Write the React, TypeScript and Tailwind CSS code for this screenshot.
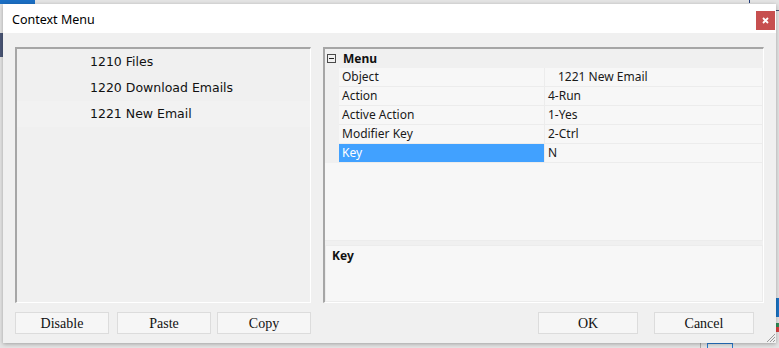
const ui = "font-['Noto_Sans','Liberation_Sans',sans-serif]";

const listItems = ["1210 Files", "1220 Download Emails", "1221 New Email"];

const props = [
  { name: "Object", value: "1221 New Email", indent: true },
  { name: "Action", value: "4-Run" },
  { name: "Active Action", value: "1-Yes" },
  { name: "Modifier Key", value: "2-Ctrl" },
  { name: "Key", value: "N", selected: true },
];

const Button = ({ label, width }: { label: string; width: string }) => (
  <button
    className={`${width} h-[22px] border border-[#dcdcdc] bg-[#f6f6f6] pt-[1px] font-['Liberation_Serif',serif] text-[14px] leading-none text-[#111]`}
  >
    {label}
  </button>
);

const PropertyGrid = () => (
  <div className="flex h-full flex-1 flex-col border-t-2 border-l-2 border-t-[#a6a6a6] border-l-[#a6a6a6] border-r border-b border-r-white border-b-white bg-[#f0f0f0]">
    <div className={`flex h-[19px] items-center ${ui}`}>
      <span className="ml-[2px] flex h-[9px] w-[9px] items-center justify-center border border-[#4a4a4a]">
        <span className="h-px w-[5px] bg-[#222]" />
      </span>
      <span className="ml-[7px] text-[12px] font-bold text-[#111]">Menu</span>
    </div>
    <div className="flex flex-col">
      {props.map((p) => (
        <div key={p.name} className={`flex h-[19px] ${ui} text-[12px] text-[#1a1a1a]`}>
          <div className="w-[14px] bg-[#f0f0f0]" />
          <div
            className={`flex w-[205px] items-center border-b border-[#ececec] pl-[3px] ${
              p.selected ? "bg-[#41a1ff] text-white" : "bg-[#f7f7f7]"
            }`}
          >
            {p.name}
          </div>
          <div className="w-px bg-[#ececec]" />
          <div
            className={`flex flex-1 items-center border-b border-r border-[#ececec] bg-[#f7f7f7] ${
              p.indent ? "pl-[13px]" : "pl-[3px]"
            }`}
          >
            {p.value}
          </div>
        </div>
      ))}
    </div>
    <div className="flex-1 border-r border-b border-[#ececec] bg-[#f7f7f7]" />
    <div className="h-[4px] bg-[#f0f0f0]" />
    <div
      className={`h-[57px] border border-[#ececec] bg-[#f7f7f7] pl-[6px] pt-[2px] text-[12px] font-bold leading-[16px] text-[#111] ${ui}`}
    >
      Key
    </div>
  </div>
);

export default function App() {
  return (
    <div className="relative h-[348px] w-[779px] overflow-hidden bg-[#e4e4e4]">
      {/* desktop bits around the window */}
      <div className="absolute left-0 top-0 h-[4px] w-[35px] bg-[#1c6fc4]" />
      <div className="absolute left-0 top-[33px] h-[24px] w-[3px] bg-[#4b5777]" />
      <div className="absolute right-0 top-[10px] h-px w-[3px] bg-[#4b5777]" />
      <div className="absolute left-[749px] top-0 h-[3px] w-px bg-[#1f3b7a]" />
      <div className="absolute right-0 top-[298px] h-[19px] w-[3px] bg-[#1a74c4]" />
      <div className="absolute right-0 top-[323px] h-[4px] w-[3px] bg-[#2e8b57]" />
      <div className="absolute right-0 top-[327px] h-[5px] w-[3px] bg-[#d84040]" />
      <div className="absolute left-[700px] top-[340px] h-[8px] w-px bg-[#a8a8a8]" />
      <div className="absolute left-[707px] top-[343px] h-[8px] w-[26px] border border-[#2a7bd0]" />

      <div className="absolute left-[3px] top-[4px] flex h-[339px] w-[773px] flex-col bg-[#f0f0f0] shadow-[0_1px_4px_rgba(0,0,0,0.3)]">
        <div className="flex h-[29px] items-start justify-between bg-white pl-[9px] pr-[1px]">
          <span className={`mt-[7px] text-[12.5px] text-black ${ui}`}>Context Menu</span>
          <div className="mt-[7px] flex h-[19px] w-[19px] items-center justify-center bg-[#c75050]">
            <svg width="7" height="7" viewBox="0 0 7 7">
              <path d="M1 1 L6 6 M6 1 L1 6" stroke="white" strokeWidth="1.8" />
            </svg>
          </div>
        </div>

        <div className="relative flex flex-1 flex-col px-[12px] pb-[9px] pt-[14px]">
          <div className="flex h-[256px] gap-[12px]">
            <div className="flex w-[296px] flex-col border-t-2 border-l-2 border-t-[#a6a6a6] border-l-[#a6a6a6] border-r border-b border-r-white border-b-white bg-[#f0f0f0] font-['DejaVu_Sans',sans-serif] text-[12.5px] text-[#111]">
              {listItems.map((t, i) => (
                <div
                  key={t}
                  className={`flex h-[26px] items-center pl-[73px] ${i === 2 ? "bg-[#f2f2f2]" : ""}`}
                >
                  {t}
                </div>
              ))}
            </div>
            <PropertyGrid />
          </div>

          <div className="mt-[9px] flex items-center">
            <Button label="Disable" width="w-[94px]" />
            <div className="w-[8px]" />
            <Button label="Paste" width="w-[94px]" />
            <div className="w-[6px]" />
            <Button label="Copy" width="w-[94px]" />
            <div className="flex-1" />
            <Button label="OK" width="w-[100px]" />
            <div className="w-[16px]" />
            <Button label="Cancel" width="w-[100px]" />
            <div className="w-[10px]" />
          </div>

          <svg className="absolute bottom-0 right-0" width="11" height="11" viewBox="0 0 11 11">
            <path d="M10 2 L2 10 M10 5 L5 10 M10 8 L8 10" stroke="#9a9a9a" strokeWidth="1" />
          </svg>
        </div>
      </div>
    </div>
  );
}
